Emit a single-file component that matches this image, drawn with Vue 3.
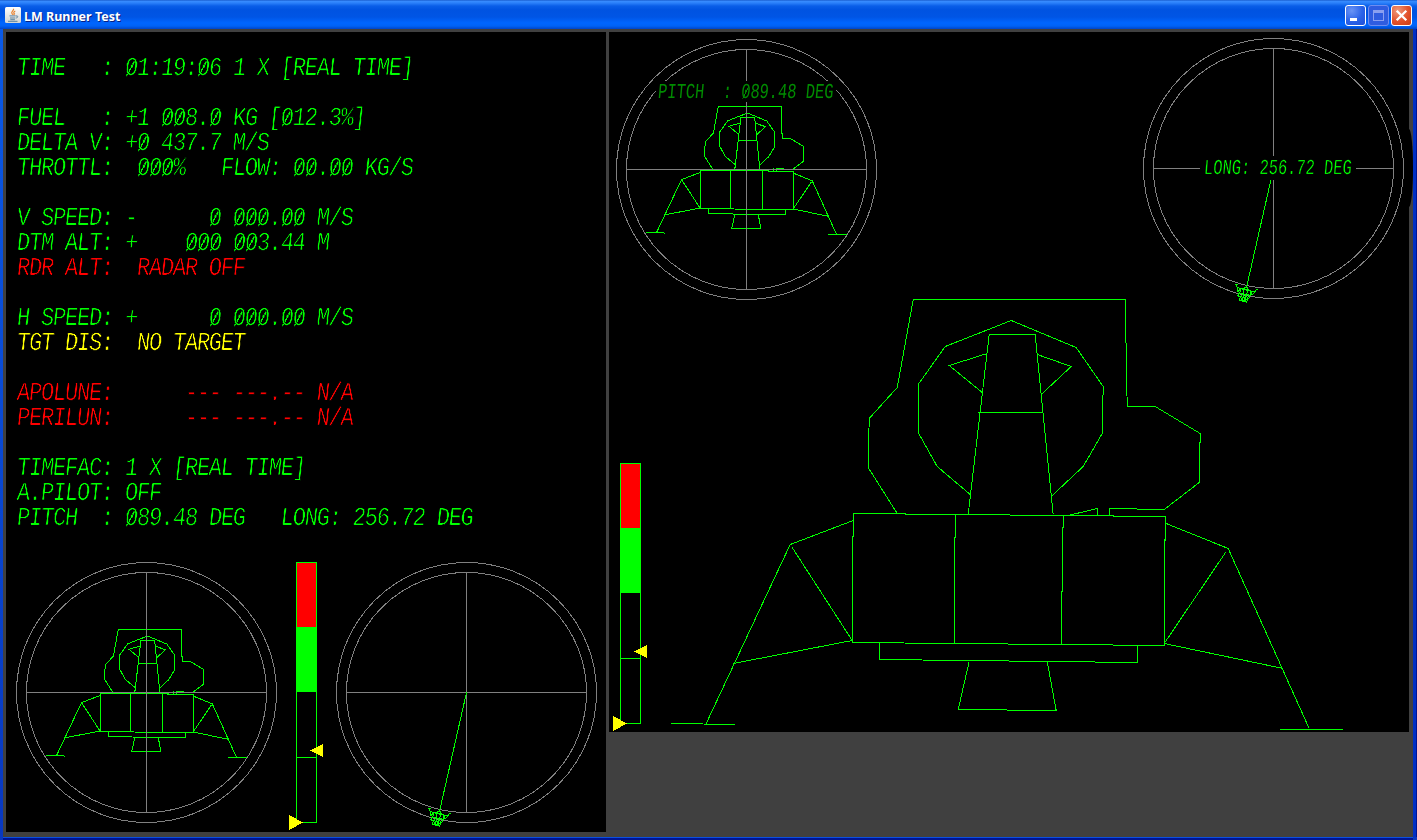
<script setup>
const rows = [
  { t: 'TIME   : 01:19:06 1 X [REAL TIME]' },
  { t: '' },
  { t: 'FUEL   : +1 008.0 KG [012.3%]' },
  { t: 'DELTA V: +0 437.7 M/S' },
  { t: 'THROTTL:  000%   FLOW: 00.00 KG/S' },
  { t: '' },
  { t: 'V SPEED: -      0 000.00 M/S' },
  { t: 'DTM ALT: +    000 003.44 M' },
  { t: 'RDR ALT:  RADAR OFF', c: 'red' },
  { t: '' },
  { t: 'H SPEED: +      0 000.00 M/S' },
  { t: 'TGT DIS:  NO TARGET', c: 'yellow' },
  { t: '' },
  { t: 'APOLUNE:      --- ---.-- N/A', c: 'red' },
  { t: 'PERILUN:      --- ---.-- N/A', c: 'red' },
  { t: '' },
  { t: 'TIMEFAC: 1 X [REAL TIME]' },
  { t: 'A.PILOT: OFF' },
  { t: 'PITCH  : 089.48 DEG   LONG: 256.72 DEG' },
]
// Zeros are split out so that they can carry a slash.
const parts = (t) => t.split(/(0)/).filter((p) => p !== '')
const pitchText = 'PITCH  : 089.48 DEG'
const longText = 'LONG: 256.72 DEG'
</script>

<template>
  <div class="window">
    <header class="titlebar">
      <svg class="app-icon" width="16" height="16" viewBox="0 0 16 16">
        <defs>
          <linearGradient id="iconBg" x1="0" y1="0" x2="0" y2="1">
            <stop offset="0" stop-color="#ffffff" />
            <stop offset="1" stop-color="#d4d4d0" />
          </linearGradient>
        </defs>
        <rect width="16" height="16" rx="1.5" fill="url(#iconBg)" />
        <path d="M8.5 1.8c1 1.6-2.8 2.6-1.600 4.400l.8 1.500M10.300 4c-1.800.9-1.900 1.700-.9 2.800l-.7 1" fill="none" stroke="#e8802c" stroke-width="1.200" />
        <path d="M4.500 8.900h6.200M5 11h5.400M5.300 12.700h4.600M3 14.300h9.500M11 9c2.400-.6 2.300 1.600.2 2" fill="none" stroke="#58819e" stroke-width="1" />
      </svg>
      <h1>LM Runner Test</h1>
      <div class="controls">
        <button class="ctl" aria-label="Minimize">
          <svg width="21" height="21" viewBox="0 0 21 21"><rect x="5" y="13" width="7" height="3" fill="#fff" /></svg>
        </button>
        <button class="ctl disabled" aria-label="Maximize">
          <svg width="21" height="21" viewBox="0 0 21 21" shape-rendering="crispEdges"><path d="M5.500 6h10v9.500h-10z" fill="none" stroke="#8a9ff0" /><rect x="5" y="5" width="11" height="3" fill="#8a9ff0" /></svg>
        </button>
        <button class="ctl close" aria-label="Close">
          <svg width="21" height="21" viewBox="0 0 21 21"><path d="M5.700 5.700l9.600 9.600M15.300 5.700l-9.600 9.600" stroke="#fff" stroke-width="2.300" /></svg>
        </button>
      </div>
    </header>

    <main class="client">
      <section class="panel instruments">
        <div class="readout">
          <div v-for="(r, i) in rows" :key="i" class="row" :class="r.c"><span v-for="(p, j) in parts(r.t)" :key="j" :class="{ zero: p === '0' }">{{ p }}</span></div>
        </div>
        <svg class="scene" width="600" height="280" viewBox="6 552 600 280">
          <defs>
            <g id="lander">
              <path d="M897 513L868 467L869 418L897 387L913 299H1125L1127 406H1155L1200 433L1199 482L1164 509L1109 508V515M1097 515V508L1068 515" />
              <path d="M970 494L937 466L918 432L918 384L945 346L1011 320L1076 347L1103 386L1102 433L1083 466L1052 495" />
              <path d="M968 514L989 334H1035L1053 514M978 412H1043M987 353L949 365L982 392M1037 354L1071 366L1041 394" />
              <path d="M853 513L852 642L1164 645L1165 516ZM955 514L954 643M1063 515L1061 644M879 642V659L1137 662V645M969 661L958 709L1056 710L1047 661" />
              <path d="M853 520L790 544L706 723M792 547L852 640L733 663M671 723L735 724" />
              <path d="M1166 523L1228 548L1309 728M1226 551L1164 643L1283 668M1280 729H1343" />
            </g>
            <g id="dial" fill="none">
              <circle r="130" />
              <circle r="120" />
              <path d="M-120 0H120M0-120V120" />
            </g>
            <g id="gauge">
              <rect x="297" y="563" width="20" height="64" fill="#f00" stroke="none" />
              <rect x="297" y="627" width="20" height="65" fill="#0f0" stroke="none" />
              <path d="M296.500 562.500h20v260h-20zM296.500 757.500h20" fill="none" stroke="#0f0" />
              <path d="M310 750.500L323 744V757ZM303 822.500L289 815V830Z" fill="#ff0" />
            </g>
            <g id="bearing" fill="none">
              <path d="M0 0L-27 119" />
              <use href="#lander" transform="translate(-27 119) rotate(193) scale(.034) translate(-1007 -715)" />
            </g>
          </defs>
          <g class="lines">
            <use href="#lander" class="green" transform="translate(-154.300 541) scale(.2985 .297)" />
            <use href="#dial" class="gray" transform="translate(146.500 692.500)" />
            <use href="#gauge" />
            <use href="#dial" class="gray" transform="translate(466.500 692.500)" />
            <use href="#bearing" class="green" transform="translate(466.500 692.500)" />
          </g>
        </svg>
      </section>

      <section class="panel view">
        <svg class="scene" width="800" height="700" viewBox="609 32 800 700">
          <g class="lines">
            <use href="#lander" class="green" transform="translate(.2 .5)" />
            <use href="#lander" class="green" transform="translate(445.700 18) scale(.2985 .297)" />
            <use href="#dial" class="gray" transform="translate(746.500 169.500)" />
            <use href="#gauge" transform="translate(324 -99)" />
            <use href="#dial" class="gray" transform="translate(1273.500 168.500)" />
            <use href="#bearing" class="green" transform="translate(1273.500 168.500)" />
          </g>
        </svg>
        <div class="tag pitch"><p><span v-for="(p, j) in parts(pitchText)" :key="j" :class="{ zero: p === '0' }">{{ p }}</span></p></div>
        <div class="tag long"><p>{{ longText }}</p></div>
        <div class="bulge"></div>
      </section>
    </main>
  </div>
</template>

<style>
body { margin: 0; background: #404040; }
</style>

<style scoped>
.window {
  box-sizing: border-box;
  width: 1417px;
  height: 840px;
  display: flex;
  flex-direction: column;
  overflow: hidden;
  background: linear-gradient(#0a5be8, #0838c0);
}
.titlebar {
  flex: none;
  box-sizing: border-box;
  height: 29px;
  padding: 1px 5px 0 5px;
  display: flex;
  align-items: center;
  gap: 3px;
  background: linear-gradient(#0f4fc0 0, #3a8dff 1px, #2a80fa 3px, #0a5ee8 6px, #0053e1 10px, #0055e5 17px, #0066ff 23px, #0062f5 26px, #0045c8 29px);
}
.app-icon { display: block; margin-bottom: 1px; }
h1 {
  margin: 0;
  flex: 1;
  font: bold 12.500px/26px "Noto Sans", "Open Sans", sans-serif;
  padding-top: 3px;
  letter-spacing: 0;
  color: #fff;
  text-shadow: 1px 1px 0 #0a1f80;
  white-space: nowrap;
}
.controls { display: flex; gap: 2px; }
.ctl {
  box-sizing: border-box;
  width: 21px;
  height: 21px;
  padding: 0;
  border: 1px solid #fff;
  border-radius: 3px;
  background: radial-gradient(circle at 30% 25%, #6a94f5, #2a62e8 55%, #1f4fd8);
}
.ctl svg { display: block; margin: -1px; }
.ctl.disabled { border-color: #6f8df0; background: #2f5ce0; }
.ctl.close { background: radial-gradient(circle at 30% 25%, #f09a7c, #e2512b 55%, #cc3c14); }
.client {
  flex: none;
  box-sizing: border-box;
  width: 1410px;
  height: 808px;
  margin-left: 3px;
  padding: 3px 4px 5px 3px;
  display: flex;
  align-items: flex-start;
  gap: 3px;
  background: #404040;
  box-shadow: 0 1px #0a50e0, 0 4px #001494, 3px 0 #0030c4, 4px 0 #001494;
}
.panel {
  position: relative;
  flex: none;
  background: #000;
}
.instruments { width: 600px; height: 800px; display: flex; flex-direction: column; }
.view { width: 800px; height: 700px; }
.readout { height: 496px; padding: 24px 0 0 11px; }
.row {
  height: 25px;
  font: 22px/25px "Liberation Mono", monospace;
  letter-spacing: -1.215px;
  color: #0f0;
  white-space: pre;
  transform: scaleY(1.180) skewX(-7deg);
  -webkit-text-stroke: .95px #000;
  filter: brightness(2);
}
.row.red { color: #f00; }
.row.yellow { color: #ff0; }
.zero {
  background: linear-gradient(to top left, transparent 43%, currentColor 45%, currentColor 55%, transparent 57%) 42% 54% / 58% 52% no-repeat;
}
.scene { display: block; }
.lines { shape-rendering: crispEdges; stroke-width: 1; }
.scene path, .scene circle { vector-effect: non-scaling-stroke; }
.green { stroke: #0f0; fill: none; }
.gray { stroke: #808080; fill: none; }
.tag {
  position: absolute;
  background: #000;
  display: flex;
  align-items: center;
  justify-content: center;
  font: 15.400px "Liberation Mono", monospace;
  white-space: pre;
}
.tag p { margin: 0; transform: scaleY(1.380) skewX(-7deg); }
.pitch { left: 47px; top: 49px; width: 180px; height: 21px; color: #008c00; filter: blur(.4px); }
.long { left: 591px; top: 124px; width: 156px; height: 24px; color: #00e000; -webkit-text-stroke: .4px #000; filter: brightness(1.400); }
.bulge {
  position: absolute;
  left: 800px;
  top: 97px;
  width: 4px;
  height: 78px;
  background: #000;
  border-radius: 0 4px 4px 0 / 0 39px 39px 0;
}
</style>
